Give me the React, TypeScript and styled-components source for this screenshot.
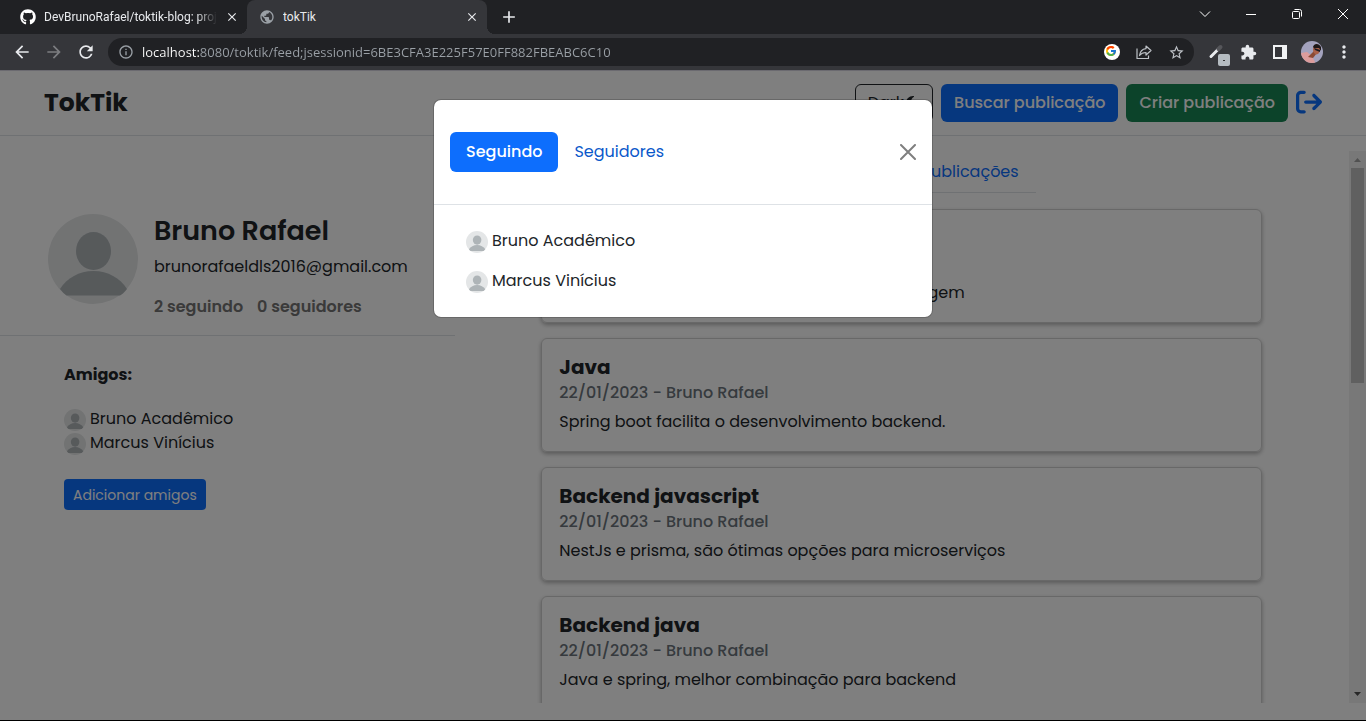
import React from "react";
import styled, { createGlobalStyle, css } from "styled-components";
import { FaArrowRightFromBracket, FaMoon } from "react-icons/fa6";
import { FaGithub } from "react-icons/fa";
import { FcGoogle } from "react-icons/fc";
import {
  MdArrowBack,
  MdArrowForward,
  MdRefresh,
  MdInfoOutline,
  MdExtension,
  MdStarBorder,
  MdMoreVert,
  MdPublic,
  MdClose,
  MdAdd,
} from "react-icons/md";

const Global = createGlobalStyle`
  *, *::before, *::after { box-sizing: border-box; }
  html, body { margin: 0; }
  body { background: #fff; font-family: Poppins, Inter, "Liberation Sans", sans-serif; font-size: 16px; line-height: 24px; color: #212529; }
  button, input { font: inherit; color: inherit; margin: 0; }
  button { cursor: pointer; }
  h1, h2, h3, p, ul { margin: 0; padding: 0; }
  ul { list-style: none; }
  a { text-decoration: none; }
`;

const Screen = styled.div`
  display: flex;
  flex-direction: column;
  height: 100vh;
  overflow: hidden;
  border-bottom: 1px solid #000;
`;

/* ---------- browser window ---------- */

const Chrome = styled.header`
  flex: none;
  font-family: "Segoe UI", Roboto, "Open Sans", sans-serif;
  font-size: 12px;
  line-height: 16px;
  color: #e8eaed;
  background: #202124;
  border-bottom: 1px solid #6b6a70;
`;

const TabStrip = styled.div`
  display: flex;
  height: 34px;
`;

const BrowserTab = styled.div<{ $active?: boolean }>`
  position: relative;
  display: flex;
  align-items: center;
  gap: 8px;
  width: ${(p) => (p.$active ? 240 : 247)}px;
  padding: 0 8px 0 ${(p) => (p.$active ? 12 : 20)}px;
  ${(p) =>
    p.$active &&
    css`
      background: #35363a;
      border-radius: 8px 8px 0 0;
      &::before,
      &::after {
        content: "";
        position: absolute;
        bottom: 0;
        width: 8px;
        height: 8px;
      }
      &::before {
        left: -8px;
        background: radial-gradient(circle at 0 0, transparent 8px, #35363a 8px);
      }
      &::after {
        right: -8px;
        background: radial-gradient(circle at 100% 0, transparent 8px, #35363a 8px);
      }
    `}
  svg {
    flex: none;
  }
`;

const TabTitle = styled.span<{ $fade?: boolean }>`
  flex: 1;
  overflow: hidden;
  white-space: nowrap;
  ${(p) =>
    p.$fade &&
    css`
      mask-image: linear-gradient(90deg, #000 88%, transparent);
    `}
`;

const ChromeButton = styled.button<{ $w?: number; $dim?: boolean }>`
  display: flex;
  align-items: center;
  justify-content: center;
  flex: none;
  width: ${(p) => p.$w ?? 32}px;
  padding: 0;
  border: 0;
  background: none;
  color: ${(p) => (p.$dim ? "#7c7d80" : "#e8eaed")};
`;

const WindowControls = styled.div`
  display: flex;
  height: 28px;
  margin-left: auto;
`;

const Toolbar = styled.div`
  display: flex;
  align-items: center;
  height: 36px;
  padding: 0 6px;
  background: #35363a;
`;

const Omnibox = styled.form`
  display: flex;
  align-items: center;
  flex: 1;
  height: 28px;
  margin: 0 6px;
  padding: 0 2px;
  border-radius: 14px;
  background: #202124;
`;

const Address = styled.input`
  flex: 1;
  min-width: 0;
  padding: 0;
  border: 0;
  outline: 0;
  font-family: "Segoe UI", "Open Sans", sans-serif;
  font-size: 13px;
  line-height: 20px;
  color: transparent;
  background: linear-gradient(90deg, #fff 58px, #9aa0a6 58px);
  background-clip: text;
  -webkit-background-clip: text;
`;

/* ---------- page ---------- */

const Page = styled.div`
  position: relative;
  display: flex;
  flex-direction: column;
  flex: 1;
  min-height: 0;
`;

const Navbar = styled.nav`
  display: flex;
  align-items: center;
  flex: none;
  gap: 8px;
  height: 65px;
  padding: 0 44px;
  border-bottom: 1px solid #dee2e6;
`;

const Brand = styled.a`
  margin-right: auto;
  font-size: 25px;
  font-weight: 700;
  color: #212529;
`;

const Button = styled.button<{ $kind: "primary" | "success" | "outline"; $small?: boolean }>`
  display: inline-flex;
  align-items: center;
  justify-content: center;
  height: ${(p) => (p.$small ? 31 : 38)}px;
  padding: 0 ${(p) => (p.$small ? 8 : 12)}px;
  border: 1px solid transparent;
  border-radius: ${(p) => (p.$small ? 4 : 6)}px;
  font-size: ${(p) => (p.$small ? 14 : 16)}px;
  font-weight: ${(p) => (p.$small || p.$kind === "outline" ? 400 : 500)};
  white-space: nowrap;
  color: #fff;
  ${(p) => p.$kind === "primary" && "background: #0d6efd;"}
  ${(p) => p.$kind === "success" && "background: #198754;"}
  ${(p) => p.$kind === "outline" && "background: none; color: #212529; border-color: #212529;"}
`;

const IconLink = styled.a`
  display: flex;
  padding-bottom: 3px;
  color: #0d6efd;
`;

const Columns = styled.div`
  display: grid;
  grid-template-columns: 1fr 2fr;
  flex: 1;
  min-height: 0;
`;

const Profile = styled.section`
  display: flex;
  align-items: flex-start;
  gap: 16px;
  height: 200px;
  padding: 78px 0 0 48px;
  border-bottom: 1px solid #dee2e6;
`;

const ProfileName = styled.h1`
  margin-bottom: 7px;
  font-size: 27px;
  line-height: 34px;
  font-weight: 600;
`;

const Muted = styled.div`
  display: flex;
  gap: 14px;
  margin-top: 16px;
  font-weight: 600;
  color: #747474;
`;

const Friends = styled.section`
  padding: 27px 64px;
`;

const FriendsTitle = styled.h2`
  font-size: 16px;
  line-height: 24px;
  font-weight: 700;
`;

const PersonList = styled.ul<{ $gap: number }>`
  display: flex;
  flex-direction: column;
  gap: ${(p) => p.$gap}px;
`;

const Person = styled.li`
  display: flex;
  align-items: center;
  gap: 4px;
  svg {
    margin-top: 2px;
  }
`;

const FriendsList = styled(PersonList)`
  margin: 20px 0 24px;
`;

const FeedArea = styled.main`
  display: flex;
  min-height: 0;
  margin: 15px 0 17px;
`;

const Feed = styled.div`
  flex: 1;
  overflow: hidden;
  padding: 0 87px 0 86px;
`;

const FeedTabs = styled.div`
  display: flex;
  justify-content: flex-end;
  width: 268px;
  height: 42px;
  margin: 0 auto 16px;
  border-bottom: 1px solid #dee2e6;
`;

const FeedTab = styled.a`
  padding: 9px 17px 8px;
  white-space: nowrap;
  color: #0d6efd;
`;

const Post = styled.article`
  margin-bottom: 15px;
  padding: 16px 17px;
  border: 1px solid #d0d0d0;
  border-radius: 6px;
  box-shadow: 0 2px 4px rgba(0, 0, 0, 0.3);
`;

const PostTitle = styled.h3`
  font-size: 20px;
  line-height: 24px;
  font-weight: 700;
`;

const PostMeta = styled.p`
  line-height: 28px;
  font-weight: 500;
  color: #6c757d;
`;

const PostText = styled.p`
  margin-top: 2px;
  line-height: 26px;
`;

const ScrollTrack = styled.div`
  display: flex;
  flex-direction: column;
  align-items: center;
  flex: none;
  width: 17px;
  background: #f1f1f1;
`;

const ScrollThumb = styled.div`
  width: 13px;
  height: 39%;
  margin-bottom: auto;
  background: #c1c1c1;
`;

const Backdrop = styled.div`
  position: absolute;
  inset: 0;
  padding-top: 28px;
  background: rgba(0, 0, 0, 0.5);
`;

const Dialog = styled.div`
  max-width: 500px;
  margin: 0 auto;
  border: 1px solid rgba(0, 0, 0, 0.18);
  border-radius: 8px;
  background: #fff;
  background-clip: padding-box;
`;

const DialogHeader = styled.div`
  display: flex;
  align-items: center;
  height: 105px;
  padding: 0 16px;
  border-bottom: 1px solid #dee2e6;
`;

const Pill = styled.button<{ $active?: boolean }>`
  height: 40px;
  padding: 0 16px;
  border: 0;
  border-radius: 6px;
  background: ${(p) => (p.$active ? "#0d6efd" : "none")};
  color: ${(p) => (p.$active ? "#fff" : "#0a58ca")};
  font-weight: ${(p) => (p.$active ? 500 : 400)};
`;

const CloseButton = styled.button`
  display: flex;
  margin-left: auto;
  padding: 0;
  border: 0;
  background: none;
  color: #7f7f7f;
`;

const DialogBody = styled.div`
  padding: 24px 32px;
`;

/* ---------- drawings ---------- */

const Avatar = ({ size }: { size: number }) => (
  <svg width={size} height={size} viewBox="0 0 90 90" aria-hidden="true">
    <circle cx="45" cy="45" r="45" fill="#e4e6e7" />
    <ellipse cx="45.500" cy="37" rx="17.500" ry="19" fill="#aeb4b7" />
    <path d="M12 75c7-11 19-18 33.500-18S72 64 79 75q-4 5-7 6.500H18.500Q15 79 12 75z" fill="#aeb4b7" />
  </svg>
);

const CloseIcon = () => (
  <svg width="16" height="16" viewBox="0 0 16 16" stroke="currentColor" strokeWidth="2" strokeLinecap="round" aria-hidden="true">
    <path d="M1 1l14 14M15 1L1 15" />
  </svg>
);

const Caret = ({ down }: { down?: boolean }) => (
  <svg width="17" height="17" viewBox="0 0 17 17" aria-hidden="true">
    {down ? <path d="M5 6h7l-3.500 4z" fill="#505050" /> : <path d="M5 11h7l-3.500-4z" fill="#a3a3a3" />}
  </svg>
);

const GoogleBadge = () => (
  <svg width="16" height="16" viewBox="0 0 16 16" aria-hidden="true">
    <circle cx="8" cy="8" r="8" fill="#fff" />
    <FcGoogle x="1" y="1" width="14" height="14" />
  </svg>
);

const ShareIcon = () => (
  <svg width="16" height="16" viewBox="0 0 16 16" fill="none" stroke="#bdc1c6" strokeWidth="1.200" strokeLinejoin="round" aria-hidden="true">
    <path d="M1 4.500v10h11.500v-3" />
    <path d="M10 2l5 4.500-5 4.500V8.500C7 8.500 5 9.500 3.500 11.500 4 7.500 6.500 5 10 4.600z" />
  </svg>
);

const PickerIcon = () => (
  <svg width="28" height="28" viewBox="0 0 28 28" aria-hidden="true">
    <path d="M9 18.500l7-7" stroke="#e8eaed" strokeWidth="3" strokeLinecap="round" />
    <path d="M16.500 11l2-2" stroke="#55565a" strokeWidth="4" strokeLinecap="round" />
    <rect x="16" y="16" width="12" height="12" rx="2" fill="#b5bcc1" />
    <rect x="21" y="22" width="2" height="1" fill="#333" />
  </svg>
);

const PanelIcon = () => (
  <svg width="14" height="14" viewBox="0 0 14 14" aria-hidden="true">
    <path d="M0 0h14v14H0zM2 2v10h7V2z" fill="#f1f3f4" fillRule="evenodd" />
  </svg>
);

const UserPhoto = () => (
  <svg width="22" height="22" viewBox="0 0 22 22" aria-hidden="true">
    <defs>
      <clipPath id="photo">
        <circle cx="11" cy="11" r="11" />
      </clipPath>
    </defs>
    <g clipPath="url(#photo)">
      <rect width="22" height="22" fill="#a3a2bd" />
      <path d="M0 12l6-1 5 4 4 8H0z" fill="#dc9c9c" />
      <path d="M7 16l5 1 4-5-3-2z" fill="#8b4a34" />
      <ellipse cx="15.500" cy="8.500" rx="3.500" ry="5" fill="#a96048" />
      <path d="M12 6c1-4 6-4 8 0v4l-2-3-5 0z" fill="#1d1718" />
      <path d="M13 7l6 2v2l-5-2z" fill="#1b1a22" />
    </g>
  </svg>
);

const WindowIcon = ({ d }: { d: string }) => (
  <svg width="12" height="12" viewBox="0 0 12 12" fill="none" stroke="#fff" strokeWidth="1" aria-hidden="true">
    <path d={d} />
  </svg>
);

/* ---------- content ---------- */

const people = ["Bruno Acadêmico", "Marcus Vinícius"];

const posts = [
  { title: "Javascript", text: "Javascript é uma excelente e moderna linguagem" },
  { title: "Java", text: "Spring boot facilita o desenvolvimento backend." },
  { title: "Backend javascript", text: "NestJs e prisma, são ótimas opções para microserviços" },
  { title: "Backend java", text: "Java e spring, melhor combinação para backend" },
];

const People = () => (
  <>
    {people.map((name) => (
      <Person key={name}>
        <Avatar size={22} />
        {name}
      </Person>
    ))}
  </>
);

const BrowserChrome = () => (
  <Chrome>
    <TabStrip>
      <BrowserTab>
        <FaGithub size={16} color="#fff" />
        <TabTitle $fade>DevBrunoRafael/toktik-blog: projeto</TabTitle>
        <ChromeButton $w={14} aria-label="Fechar guia">
          <MdClose size={14} />
        </ChromeButton>
      </BrowserTab>
      <BrowserTab $active>
        <MdPublic size={16} color="#9aa0a6" />
        <TabTitle>tokTik</TabTitle>
        <ChromeButton $w={14} aria-label="Fechar guia">
          <MdClose size={14} />
        </ChromeButton>
      </BrowserTab>
      <ChromeButton $w={44} aria-label="Nova guia">
        <MdAdd size={20} />
      </ChromeButton>
      <WindowControls>
        <ChromeButton $w={46} aria-label="Pesquisar guias">
          <WindowIcon d="M1 3.500l5 5 5-5" />
        </ChromeButton>
        <ChromeButton $w={46} aria-label="Minimizar">
          <WindowIcon d="M1 6.500h10" />
        </ChromeButton>
        <ChromeButton $w={46} aria-label="Restaurar">
          <WindowIcon d="M2.500 3.500h5q1 0 1 1v5q0 1-1 1h-5q-1 0-1-1v-5q0-1 1-1zM3.500 1.500h5q2 0 2 2v5" />
        </ChromeButton>
        <ChromeButton $w={46} aria-label="Fechar">
          <WindowIcon d="M1 1l10 10M11 1L1 11" />
        </ChromeButton>
      </WindowControls>
    </TabStrip>
    <Toolbar>
      <ChromeButton aria-label="Voltar">
        <MdArrowBack size={20} />
      </ChromeButton>
      <ChromeButton $dim aria-label="Avançar">
        <MdArrowForward size={20} />
      </ChromeButton>
      <ChromeButton aria-label="Recarregar">
        <MdRefresh size={20} />
      </ChromeButton>
      <Omnibox>
        <ChromeButton type="button" aria-label="Informações do site">
          <MdInfoOutline size={16} color="#9aa0a6" />
        </ChromeButton>
        <Address
          aria-label="Endereço"
          defaultValue="localhost:8080/toktik/feed;jsessionid=6BE3CFA3E225F57E0FF882FBEABC6C10"
        />
        <ChromeButton type="button" aria-label="Google">
          <GoogleBadge />
        </ChromeButton>
        <ChromeButton type="button" aria-label="Compartilhar">
          <ShareIcon />
        </ChromeButton>
        <ChromeButton type="button" aria-label="Favoritos">
          <MdStarBorder size={17} color="#bdc1c6" />
        </ChromeButton>
      </Omnibox>
      <ChromeButton aria-label="Seletor de cores">
        <PickerIcon />
      </ChromeButton>
      <ChromeButton aria-label="Extensões">
        <MdExtension size={17} />
      </ChromeButton>
      <ChromeButton aria-label="Painel lateral">
        <PanelIcon />
      </ChromeButton>
      <ChromeButton aria-label="Perfil">
        <UserPhoto />
      </ChromeButton>
      <ChromeButton aria-label="Menu">
        <MdMoreVert size={20} />
      </ChromeButton>
    </Toolbar>
  </Chrome>
);

export default function App() {
  return (
    <>
      <Global />
      <Screen>
        <BrowserChrome />
        <Page>
          <Navbar>
            <Brand href="#">TokTik</Brand>
            <Button $kind="outline">
              Dark
              <FaMoon size={16} />
            </Button>
            <Button $kind="primary">Buscar publicação</Button>
            <Button $kind="success">Criar publicação</Button>
            <IconLink href="#" aria-label="Sair">
              <FaArrowRightFromBracket size={26} />
            </IconLink>
          </Navbar>
          <Columns>
            <aside>
              <Profile>
                <Avatar size={90} />
                <div>
                  <ProfileName>Bruno Rafael</ProfileName>
                  <p>brunorafaeldls2016@gmail.com</p>
                  <Muted>
                    <span>2 seguindo</span>
                    <span>0 seguidores</span>
                  </Muted>
                </div>
              </Profile>
              <Friends>
                <FriendsTitle>Amigos:</FriendsTitle>
                <FriendsList $gap={0}>
                  <People />
                </FriendsList>
                <Button $kind="primary" $small>
                  Adicionar amigos
                </Button>
              </Friends>
            </aside>
            <FeedArea>
              <Feed>
                <FeedTabs>
                  <FeedTab href="#">Minhas publicações</FeedTab>
                </FeedTabs>
                {posts.map((post) => (
                  <Post key={post.title}>
                    <PostTitle>{post.title}</PostTitle>
                    <PostMeta>22/01/2023 - Bruno Rafael</PostMeta>
                    <PostText>{post.text}</PostText>
                  </Post>
                ))}
              </Feed>
              <ScrollTrack>
                <Caret />
                <ScrollThumb />
                <Caret down />
              </ScrollTrack>
            </FeedArea>
          </Columns>
          <Backdrop>
            <Dialog role="dialog" aria-label="Seguindo e seguidores">
              <DialogHeader>
                <Pill $active>Seguindo</Pill>
                <Pill>Seguidores</Pill>
                <CloseButton aria-label="Fechar">
                  <CloseIcon />
                </CloseButton>
              </DialogHeader>
              <DialogBody>
                <PersonList $gap={16}>
                  <People />
                </PersonList>
              </DialogBody>
            </Dialog>
          </Backdrop>
        </Page>
      </Screen>
    </>
  );
}
